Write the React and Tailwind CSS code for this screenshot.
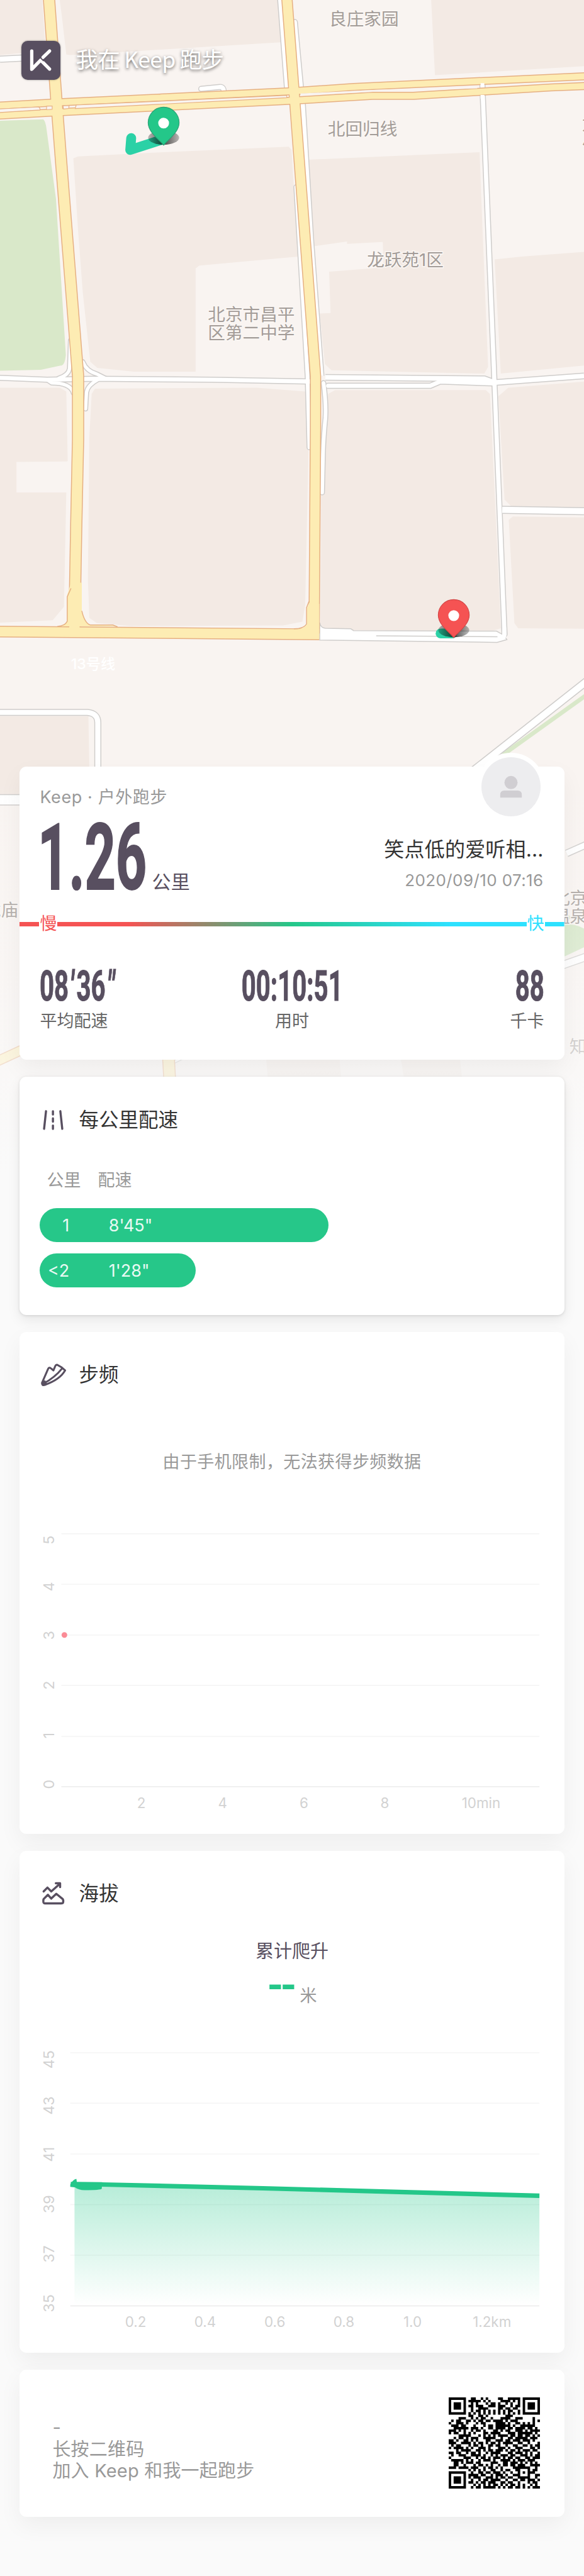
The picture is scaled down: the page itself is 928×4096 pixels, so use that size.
import React from "react";

const SANS = "font-['Inter','Noto_Sans_CJK_SC',sans-serif]";
const BLOCKS = [
  "M127 0H594L597 90L270 110L150 117L141 116L131 30Z",
  "M917 0H1242V141L925 160Z",
  "M0 0H90L97 108L0 117Z",
  "M156 337L166 333L325 325L614 312L620 319L634 546L424 565L416 571V791H285L207 783L192 770L176 622L166 490Z",
  "M654 340L1020 324L1023 408L1038 781L1030 795L705 788L691 775L680 667L703 666L700 578L816 569L814 515L738 519V514L667 524Z",
  "M1052 552L1109 546L1242 536V778L1065 795Z",
  "M0 825H127L141 833L144 981L142 982L35 983V1048H141L136 1291L112 1320L0 1325Z",
  "M202 827L546 825L649 833L656 963L649 1288L643 1323L602 1331L277 1332L206 1326L190 1315L187 1234L190 930L195 838Z",
  "M713 830H1033L1042 838L1053 1071L1065 1337L1049 1342L752 1341L689 1337L681 1326L684 935L698 838Z",
  "M1081 825L1242 812V1079H1089L1073 1063L1060 843Z",
  "M1091 1099L1242 1101V1338L1102 1337L1094 1326L1082 1106Z",
  "M0 1524H188L191 1690H0Z",
  "M566 2250H722L726 2300H570Z",
  "M852 2250H978L983 2300H860Z",
];

const WHITE_ROADS = [
  ["M0 126L60 123", 11],
  ["M428 189L468 185Q476 185 476 196", 9],
  ["M596 0L612 208", 9],
  ["M627 47L640 187", 9],
  ["M643 215L661 510L683 800", 10],
  ["M630 398L654 800L658 952", 8],
  ["M688 815Q694 860 692 890Q688 930 687 963L685 1048", 8],
  ["M1026 179L1027 210L1051 800L1073 1350", 9],
  ["M1068 1085L1242 1088", 13],
  ["M0 804L100 808L200 806L450 808L660 812", 9],
  ["M692 803L1030 806L1052 814L1242 800", 10],
  ["M698 821H915L936 812L1052 816", 9],
  ["M150 725L148 784Q146 798 125 805", 7],
  ["M176 770Q184 790 206 796L226 806", 7],
  ["M100 808L110 815Q150 815 156 836", 7],
  ["M182 870L184 835Q186 820 208 808", 7],
  ["M0 1516H186Q208 1518 208 1538V1640", 11],
  ["M1250 1448L1004 1642", 14],
  ["M0 1702H60", 20],
  ["M1205 1816L1250 1796", 12],
  ["M1190 2056L1250 2035", 14],
  ["M366 2262L390 2250", 4],
];

const YELLOW_ROADS = [
  ["M104 -5L120 214L131 357L166 800V935L162 1125L158 1350", 22],
  ["M610 -5L626 204L671 800V908L668 1348", 20],
  ["M-5 225L120 218L626 194L752 185L1250 162", 13],
  ["M-5 246L120 239L626 214L792 204H879L1172 186L1250 183", 13],
  ["M-5 1344L679 1350", 21],
  ["M-5 2258L60 2228", 18],
  ["M358 2245L361 2300", 23],
];

function Road({ list, edge, fill }) {
  return (
    <>
      {list.map(([d, w]) => (
        <path key={"e" + d} d={d} stroke={edge} strokeWidth={w + 4} fill="none" strokeLinejoin="round" strokeLinecap={w < 10 ? "round" : "butt"} />
      ))}
      {list.map(([d, w]) => (
        <path key={"f" + d} d={d} stroke={fill} strokeWidth={w} fill="none" strokeLinejoin="round" strokeLinecap={w < 10 ? "round" : "butt"} />
      ))}
    </>
  );
}

function Pin({ x, y, color, edge }) {
  return (
    <g transform={`translate(${x} ${y})`}>
      <ellipse cx="0" cy="31" rx="33" ry="15" fill="url(#pinShadow)" />
      <path d="M0 47C-8 36 -33 20 -33 -1A33 33 0 0 1 33 -1C33 20 8 36 0 47Z" fill={color} stroke={edge} strokeWidth="1.5" />
      <circle r="11.5" fill="#fff" />
    </g>
  );
}

function MapLabel({ x, y, children, anchor = "middle" }) {
  return (
    <text x={x} y={y + 13.5} fontSize="37" textAnchor={anchor} fill="#a39c98" stroke="#fbf7f4" strokeWidth="4" paintOrder="stroke">
      {children}
    </text>
  );
}

function MapCanvas() {
  return (
    <svg className={`absolute left-0 top-0 h-[1868px] w-[928px] ${SANS}`} viewBox="0 0 1242 2500" preserveAspectRatio="none">
      <defs>
        <linearGradient id="fade" x1="0" y1="0" x2="0" y2="1">
          <stop offset="0" stopColor="#fafafa" stopOpacity="0" />
          <stop offset="0.5" stopColor="#fafafa" stopOpacity="0.35" />
          <stop offset="1" stopColor="#fafafa" />
        </linearGradient>
        <linearGradient id="pinShadow" x1="0" x2="1">
          <stop offset="0" stopColor="#000" stopOpacity="0.25" />
          <stop offset="0.5" stopColor="#000" stopOpacity="0.7" />
          <stop offset="1" stopColor="#000" stopOpacity="0.25" />
        </linearGradient>
      </defs>
      <rect width="1242" height="2500" fill="#f9f4f1" />
      {BLOCKS.map((d) => (
        <path key={d} d={d} fill="#f3eae4" />
      ))}
      <path d="M0 257L92 254Q97 258 99 275L119 423L140 755Q138 778 129 778L87 787L0 789Z" fill="#d9e8c9" />
      <path d="M1250 1477L1070 1606" stroke="#d9e8c9" strokeWidth="9" />
      <path d="M1195 1966Q1225 1966 1242 1976V2016L1195 2038Z" fill="#d3e6c4" />
      <path d="M1200 1960L1212 1950" stroke="#d9e8c9" strokeWidth="8" />
      <Road list={WHITE_ROADS} edge="#cfcdcb" fill="#fff" />
      <path d="M680 1325Q682 1336 692 1337L746 1338L752 1342L1056 1343L1072 1352L1078 1361L1057 1367L680 1362Z" fill="#fff" stroke="#cfcdcb" strokeWidth="2" />
      <path d="M800 1353L1058 1355" stroke="#cfcdcb" strokeWidth="2" />
      <rect x="1068" y="1335" width="8.5" height="22" fill="#fff" />
      <Road list={YELLOW_ROADS} edge="#e6b083" fill="#fdecb3" />
      <path d="M151 1240L143 1266V1322Q138 1333 122 1333H250L244 1331L192 1330Q180 1326 174 1300V1240Z" fill="#fdecb3" />
      <path d="M151 1252L143 1270V1322Q138 1332 122 1333M250 1334L240 1330H192Q180 1326 174 1300M657 1280L652 1293V1328Q646 1338 625 1338" fill="none" stroke="#e6b083" strokeWidth="2" />
      <path d="M658 1282L653 1294V1328Q648 1338 630 1340H679V1285Z" fill="#fdecb3" />
      <g fill="#f9f4f1" stroke="#e6b083" strokeWidth="1.5">
        <path d="M-2 232L82 227.500Q86 230 85 234L-2 239.500Z" />
        <path d="M99 226L111 225.500V232.500L99 233.500Z" />
        <path d="M134 225L147 224.500L146 231L135 232Z" />
        <path d="M162 223.500L610 203V208L160 231Z" />
      </g>
      <path d="M639 201L800 193L1015 186" stroke="#f9f4f1" strokeWidth="4" fill="none" />
      <rect x="1022" y="177" width="8" height="8" fill="#fff" />
      <rect x="1022" y="202" width="8" height="8" fill="#fff" />
      <MapLabel x={774} y={40}>良庄家园</MapLabel>
      <MapLabel x={771} y={274}>北回归线</MapLabel>
      <MapLabel x={862} y={553}>龙跃苑1区</MapLabel>
      <MapLabel x={534.600} y={669}>北京市昌平</MapLabel>
      <MapLabel x={534.600} y={708}>区第二中学</MapLabel>
      <MapLabel x={1238} y={263} anchor="start">龙</MapLabel>
      <MapLabel x={1238} y={301} anchor="start">小</MapLabel>
      <MapLabel x={39} y={1936} anchor="end">龙庙</MapLabel>
      <MapLabel x={1175} y={1911} anchor="start">北京</MapLabel>
      <MapLabel x={1175} y={1950} anchor="start">温泉</MapLabel>
      <MapLabel x={1211} y={2227} anchor="start">知</MapLabel>
      <text x="198" y="1424" fontSize="31" fontWeight="500" textAnchor="middle" fill="#fff">13号线</text>
      <path d="M279 294L277 319L345 297" fill="none" stroke="#2bd1a6" strokeWidth="21" strokeLinecap="round" strokeLinejoin="round" />
      <path d="M937 1348H962" stroke="#2bd1a6" strokeWidth="21" strokeLinecap="round" />
      <Pin x={348} y={262} color="#24c789" edge="#2c9f75" />
      <Pin x={965} y={1310} color="#f55353" edge="#d34545" />
      <rect y="1650" width="1242" height="850" fill="url(#fade)" />
    </svg>
  );
}

const SOFT = "shadow-[0_14px_36px_rgba(0,0,0,0.05)]";
const LIFTED = "shadow-[0_8px_20px_rgba(0,0,0,0.08),0_1px_4px_rgba(0,0,0,0.12)]";

function Card({ className = "", shadow = SOFT, children }) {
  return <section className={`relative rounded-[11px] bg-white ${shadow} ${className}`}>{children}</section>;
}

function CardTitle({ icon, children }) {
  return (
    <h2 className="flex items-center gap-[21px] pl-[33px] text-[31.5px] leading-[40px] text-[#333]">
      <span className="flex size-[41px] shrink-0 items-center justify-center">{icon}</span>
      <span className="-ml-px">{children}</span>
    </h2>
  );
}

function Stat({ children, label, align, origin }) {
  return (
    <div className={`flex w-[270px] flex-col ${align}`}>
      <div className={`${origin} scale-x-[0.6] whitespace-nowrap font-[Roboto] text-[67px] font-bold leading-[48px] text-[#584f60] [-webkit-text-stroke:1px_#584f60]`}>{children}</div>
      <div className="mt-[14px] text-[27px] leading-[36px] text-[#666]">{label}</div>
    </div>
  );
}

function PaceBar({ km, pace, width }) {
  return (
    <div className={`flex h-[54px] items-center rounded-full bg-[#26c789] text-[27px] leading-none text-white/90 ${width}`}>
      <span className="w-[47.500px] text-right">{km}</span>
      <span className="pl-[62.500px]">{pace}</span>
    </div>
  );
}

function Axis({ x0, ys, yLabels, xLabels, xs, labelY, top }) {
  return (
    <>
      {ys.map((y, i) => (
        <line key={y} x1={x0} x2="1148" y1={y - top} y2={y - top} stroke={i === ys.length - 1 ? "#ebebeb" : "#f4f4f4"} strokeWidth="2" />
      ))}
      {yLabels.map(([t, y]) => (
        <text key={t} transform={`translate(115.500 ${y - top}) rotate(-90)`} textAnchor="middle" fontSize="31" fill="#d2d2d2">{t}</text>
      ))}
      {xLabels.map((t, i) => (
        <text key={t} x={xs[i]} y={labelY - top + 11} textAnchor="middle" fontSize="30" fill="#d2d2d2">{t}</text>
      ))}
    </>
  );
}

const QR = [
  "1111111001100101000011001111101111111",
  "1000001011111010100001111010101000001",
  "1011101001010001011010010100101011101",
  "1011101011011100111011100101101011101",
  "1011101001001111000011011011001011101",
  "1000001001011010101010101100101000001",
  "1111111010101010101010101010101111111",
  "0000000011001101000000011100000000000",
  "0000111001010110010001111001110000100",
  "0101100110101101101111010111000000101",
  "1001110100010110000111101001101010100",
  "0111011000100010110111111010011111100",
  "0011111101110100110111101101111011010",
  "1110101001011010001101011001110101111",
  "1011001010100011011110001110111111010",
  "0000111110001010101011110110110110101",
  "0010110101110011111001001101111101110",
  "1101001101010001100111011011101110100",
  "1110011110101101011010111100110010001",
  "0101100010110100110110010011001101011",
  "1011110101001110100011101001110001101",
  "0001011110011010110111010110101110110",
  "1101100101101001011110001101110101001",
  "0100111001111010010101110110011101011",
  "1000001110010110101110101101100110111",
  "0111110101001011101001111010111011100",
  "0011010111011000011100110111010101010",
  "0011001000101101010010110110111001111",
  "1110111101110010110101000011111110010",
  "0000000010101010011001011001100010110",
  "1111111001001101101110100100101011100",
  "1000001011110110010111010011100010011",
  "1011101010111001110101101100111110010",
  "1011101001001011011110010011011011101",
  "1011101011010110111001101100100010110",
  "1000001000101010101101010110101001010",
  "1111111001011011111010101101101010111",
];

function QrCode() {
  const d = QR.map((row, y) => row.replace(/1+/g, (m, x) => `|${x},${m.length}|`).split("|").filter((s) => s.includes(",")).map((s) => {
    const [x, w] = s.split(",");
    return `M${x} ${y}h${w}v1h-${w}z`;
  }).join("")).join("");
  return (
    <svg className="size-[145px]" viewBox="0 0 37 37">
      <path d={d} fill="#000" />
    </svg>
  );
}

export default function App() {
  return (
    <div className={`relative h-[4096px] w-[928px] overflow-hidden bg-[#fafafa] ${SANS}`}>
      <MapCanvas />
      <div className="relative flex flex-col px-[31.400px]">
        <header className="flex items-center gap-[24px] pl-[3px] pt-[65px]">
          <svg className="size-[62px] rounded-[10px] bg-[#584f60] shadow-[0_0_3px_rgba(0,0,0,0.4)]" viewBox="46.500 87 83 83">
            <path d="M68.500 108.500V147.500L87.500 128L106.500 147M106.500 108.500L92.500 122" fill="none" stroke="#fff" strokeWidth="7" strokeLinecap="round" strokeLinejoin="round" />
            <path d="M83 119L94 130" stroke="#584f60" strokeWidth="2" />
          </svg>
          <h1 className="-mt-[6px] font-['Noto_Sans_CJK_SC',sans-serif] text-[35.500px] font-normal leading-[60px] tracking-[-0.700px] text-white [text-shadow:0_2px_5px_rgba(0,0,0,0.6)]">我在 Keep 跑步</h1>
        </header>

        <main className="flex flex-col pt-[1092px]">
          <Card className="h-[466px]">
            <div className="absolute right-[31px] top-[-22px] flex size-[108px] items-center justify-center rounded-full bg-white">
              <svg className="size-[94px] rounded-full bg-[#ededef]" viewBox="0 0 126 126">
                <circle cx="63" cy="54" r="14" fill="#d0ced2" />
                <path d="M40 86V80Q40 71 49 71H77Q86 71 86 80V86Z" fill="#d0ced2" />
              </svg>
            </div>
            <div className="pl-[32px] pt-[31px] text-[27px] leading-[36px] tracking-[0.600px] text-[#999]">Keep · 户外跑步</div>
            <div className="mt-[23px] flex h-[104px] items-end justify-between px-[33px]">
              <div className="flex items-end">
                <div className="-mb-[6px] -ml-[4px] w-[181px] font-[Roboto] text-[146px] font-bold leading-[108px] text-[#584f60] [-webkit-text-stroke:2px_#584f60]">
                  <div className="origin-left scale-x-[0.59]">1.26</div>
                </div>
                <div className="-mb-[7px] text-[30px] leading-[36px] tracking-[0.400px] text-[#584f60]">公里</div>
              </div>
              <div className="-mb-[6px] text-right">
                <div className="text-[32px] leading-[40px] tracking-[0.200px] text-[#333]">笑点低的爱听相…</div>
                <div className="mt-[10px] text-[26px] leading-[38px] tracking-[0.400px] text-[#999]">2020/09/10 07:16</div>
              </div>
            </div>
            <div className="mt-[38px] flex h-[36px] items-center justify-between bg-[linear-gradient(90deg,#f55353_0%,#f55353_20%,#24c789_50%,#2de1ff_79%,#2de1ff_100%)] bg-[length:100%_7px] bg-center bg-no-repeat px-[31px] text-[27px] leading-[36px]">
              <span className="bg-white px-px text-[#f55353]">慢</span>
              <span className="bg-white px-px text-[#2de1ff]">快</span>
            </div>
            <div className="mt-[57px] flex justify-between px-[32px]">
              <Stat align="items-start" origin="origin-left" label="平均配速">
                08<i className="pl-[3px] pr-[7px]">'</i>36<i className="pl-[4px] tracking-[2px]">"</i>
              </Stat>
              <Stat align="items-center" origin="origin-center" label="用时">00:10:51</Stat>
              <Stat align="items-end" origin="origin-right" label="千卡">88</Stat>
            </div>
          </Card>

          <Card className="mt-[27px] h-[379px] pt-[48px]" shadow={LIFTED}>
            <CardTitle
              icon={
                <svg className="size-[41px]" viewBox="87 2355 54 54">
                  <path d="M99 2364L95 2401M113.500 2364V2371M113.500 2379V2386M113.500 2394V2401M129 2364L133 2401" fill="none" stroke="#584f60" strokeWidth="4.500" strokeLinecap="round" />
                </svg>
              }
            >
              每公里配速
            </CardTitle>
            <div className="mt-[57px] flex pl-[43px] text-[27px] leading-[38px] text-[#999]">
              <span className="w-[81px]">公里</span>
              <span>配速</span>
            </div>
            <div className="mt-[25px] flex flex-col gap-[18px] pl-[31.400px]">
              <PaceBar km="1" pace={"8'45\""} width="w-[459px]" />
              <PaceBar km="<2" pace={"1'28\""} width="w-[248px]" />
            </div>
          </Card>

          <Card className="mt-[27px] h-[798px] pt-[47px]">
            <CardTitle
              icon={
                <svg className="size-[41px]" viewBox="87 2897 54 54">
                  <g fill="none" stroke="#584f60" strokeWidth="4" strokeLinecap="round" strokeLinejoin="round">
                    <path d="M90.500 2942L103.500 2912Q105.500 2908 109 2911L114.500 2915.500L118.500 2906Q120 2903 123 2904Q132 2908 139 2915.500Q128 2935 96 2946Q91 2948 90.500 2942Z" />
                    <path d="M94 2943Q118 2930 133 2911" />
                  </g>
                  <path d="M90 2940L97 2936L101 2943L93 2947Z" fill="#584f60" />
                </svg>
              }
            >
              步频
            </CardTitle>
            <p className="mt-[100px] text-center text-[27px] leading-[38px] tracking-[0.400px] text-[#999]">由于手机限制，无法获得步频数据</p>
            <svg className="mt-[65px] h-[486px] w-[865px]" viewBox="42 0 1158 650">
              <Axis
                top={3225}
                x0={131}
                ys={[3264.5, 3372, 3480, 3587, 3696, 3803]}
                yLabels={[["5", 3278], ["4", 3377], ["3", 3481], ["2", 3587], ["1", 3694], ["0", 3798]]}
                xLabels={["2", "4", "6", "8", "10min"]}
                xs={[301, 474, 647, 819, 1024]}
                labelY={3837}
              />
              <circle cx="137.500" cy="255" r="6" fill="#fb8b96" />
            </svg>
          </Card>

          <Card className="mt-[27px] h-[798px] pt-[47px]">
            <CardTitle
              icon={
                <svg className="size-[41px]" viewBox="87 4003 54 54">
                  <g fill="none" stroke="#584f60" strokeWidth="4.500" strokeLinecap="round" strokeLinejoin="round">
                    <path d="M94 4042L103 4033L110 4041L120.500 4031L134 4042Q136 4045 134.500 4050Q134 4051 131 4051H97Q94 4051 93.500 4048Q93 4044 94 4042Z" />
                    <path d="M94 4026L102 4018L110 4026L127 4011M119.500 4009H128.500V4017" />
                  </g>
                </svg>
              }
            >
              海拔
            </CardTitle>
            <div className="mt-[52px] text-center text-[29px] leading-[40px] text-[#584f60]">累计爬升</div>
            <div className="mt-[29px] flex h-[40px] items-center justify-center gap-[10px]">
              <span className="mb-[28px] w-[42px] font-[Roboto] text-[66px] font-bold leading-[40px] tracking-[-5px] text-[#24c789]">--</span>
              <span className="pt-[3px] text-[27px] leading-[40px] text-[#999]">米</span>
            </div>
            <svg className="mt-[28px] h-[486px] w-[865px]" viewBox="42 0 1158 650">
              <defs>
                <linearGradient id="area" x1="0" y1="0" x2="0" y2="1">
                  <stop offset="0" stopColor="#24c789" stopOpacity="0.33" />
                  <stop offset="1" stopColor="#24c789" stopOpacity="0" />
                </linearGradient>
              </defs>
              <Axis
                top={4310}
                x0={150}
                ys={[4368.5, 4476, 4584, 4692, 4799.5, 4907.5]}
                yLabels={[["45", 4383], ["43", 4481], ["41", 4585], ["39", 4691], ["37", 4797], ["35", 4902]]}
                xLabels={["0.2", "0.4", "0.6", "0.8", "1.0", "1.2km"]}
                xs={[289, 437, 585, 732, 878, 1047]}
                labelY={4941}
              />
              <path d="M159 339L218 339L1148 363V596H159Z" fill="url(#area)" />
              <path d="M150 339Q155 329 163 327L164 334L218 334L217 348Q215 351 180 351Q168 351 160 345L150 344Z" fill="#24c789" />
              <path d="M151 338L218 339L560 347L850 355L1148 363" fill="none" stroke="#24c789" strokeWidth="9.500" />
            </svg>
          </Card>

          <Card className="mt-[27px] flex h-[233.500px] items-start justify-between pl-[52px] pr-[39px] pt-[44px]">
            <div className="pt-[31px] text-[29px] leading-[34.700px] tracking-[0.200px] text-[#999]">
              <div>-</div>
              <div>长按二维码</div>
              <div>加入 Keep 和我一起跑步</div>
            </div>
            <QrCode />
          </Card>
        </main>
      </div>
    </div>
  );
}
